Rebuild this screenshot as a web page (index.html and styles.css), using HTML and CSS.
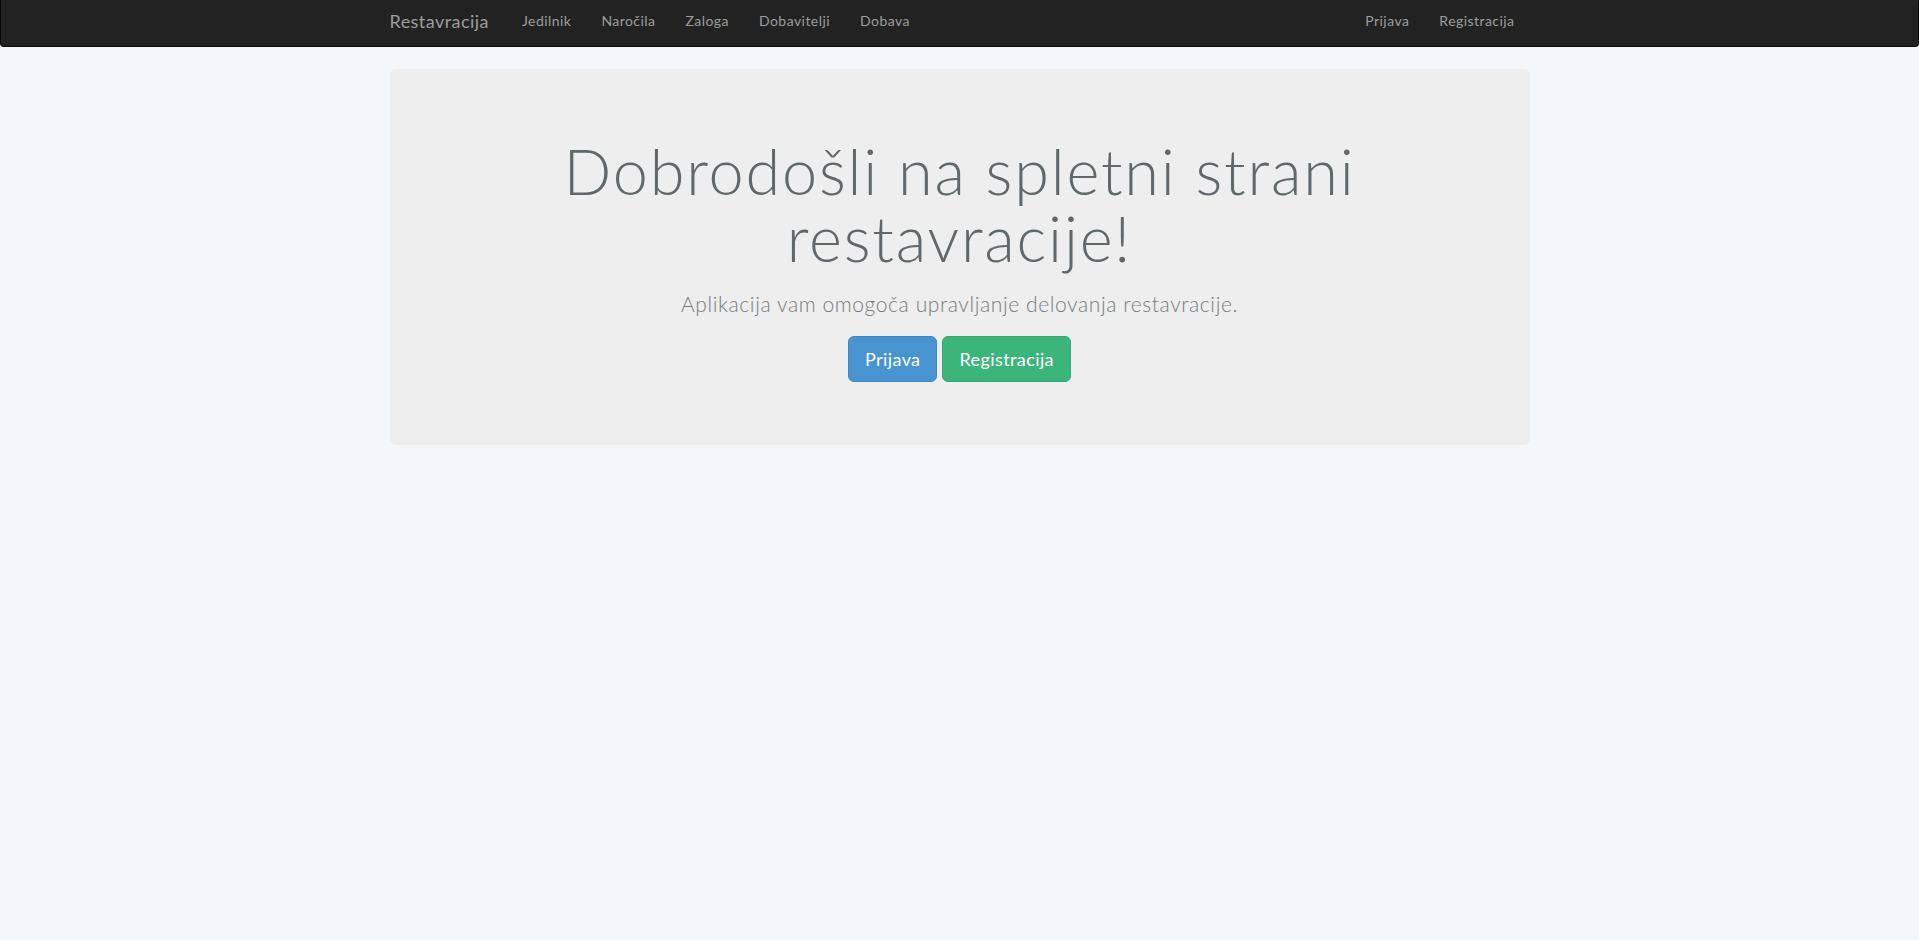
FILE: index.html
```html
<!DOCTYPE html>
<html lang="sl">
<head>
<meta charset="utf-8">
<title>Restavracija</title>
<link rel="stylesheet" href="styles.css">
</head>
<body>
<nav class="navbar">
  <div class="container nav-inner">
    <div class="nav-left">
      <a class="brand" href="#">Restavracija</a>
      <ul class="nav">
        <li><a href="#">Jedilnik</a></li>
        <li><a href="#">Naročila</a></li>
        <li><a href="#">Zaloga</a></li>
        <li><a href="#">Dobavitelji</a></li>
        <li><a href="#">Dobava</a></li>
      </ul>
    </div>
    <ul class="nav nav-right">
      <li><a href="#">Prijava</a></li>
      <li><a href="#">Registracija</a></li>
    </ul>
  </div>
</nav>
<main class="container">
  <section class="jumbotron">
    <h1 class="title">Dobrodošli na spletni strani restavracije!</h1>
    <p class="lead">Aplikacija vam omogoča upravljanje delovanja restavracije.</p>
    <div class="actions">
      <a class="btn btn-primary" href="#">Prijava</a>
      <a class="btn btn-success" href="#">Registracija</a>
    </div>
  </section>
</main>
</body>
</html>
```
FILE: styles.css
```css
* { box-sizing: border-box; }
html, body { margin: 0; padding: 0; }
body {
  background: #f3f7fa;
  font-family: "Lato", "Liberation Sans", sans-serif;
  font-size: 14px;
  line-height: 1.428;
  color: #333;
  min-height: 940px;
}
a { text-decoration: none; }
.container {
  width: 1170px;
  margin: 0 auto;
  padding: 0 15px;
}
.navbar {
  background: #222222;
  border: 1px solid #080808;
  border-top-color: #222222;
  border-radius: 0 0 4px 4px;
  margin-bottom: 22px;
}
.nav-inner {
  display: flex;
  justify-content: space-between;
  align-items: center;
  height: 45px;
}
.nav-left { display: flex; align-items: center; }
.brand {
  color: #9d9d9d;
  font-size: 18px;
  letter-spacing: 0.45px;
  padding: 0 18px 5px 0;
  line-height: 20px;
}
.nav {
  list-style: none;
  margin: 0;
  padding: 0;
  display: flex;
}
.nav a {
  display: block;
  color: #9d9d9d;
  font-size: 14px;
  letter-spacing: 0.45px;
  line-height: 20px;
  padding: 10px 15px 15px;
}
.jumbotron {
  background: #eeeeee;
  border-radius: 6px;
  padding: 48px 60px 48px;
  text-align: center;
  height: 376px;
}
.title {
  font-weight: 300;
  font-size: 63px;
  letter-spacing: 1.8px;
  line-height: 67px;
  color: #60686c;
  margin: 20px auto 0;
  max-width: 900px;
}
.lead {
  font-size: 21px;
  font-weight: 300;
  letter-spacing: 0.6px;
  color: #777b7f;
  margin: 18px 0 18px;
  line-height: 29px;
}
.actions { display: flex; justify-content: center; gap: 5px; }
.btn {
  display: inline-block;
  font-size: 18px;
  letter-spacing: 0.4px;
  line-height: 24px;
  padding: 10px 16px;
  border-radius: 6px;
  color: #fff;
  border: 1px solid transparent;
}
.btn-primary { background: #4894d0; border-color: #3d86c2; }
.btn-success { background: #3cb57b; border-color: #35a46e; }
```
